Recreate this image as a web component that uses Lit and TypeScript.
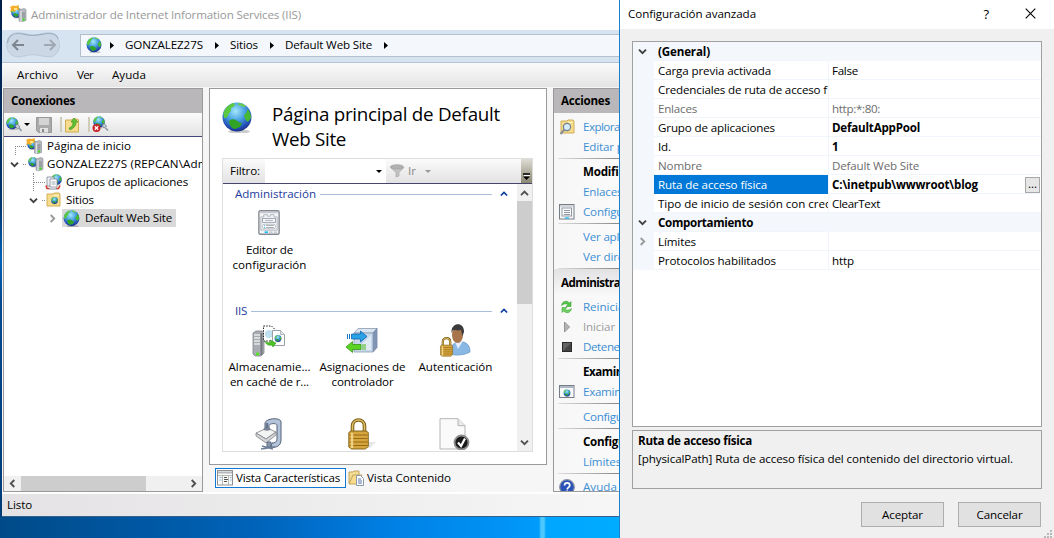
import { LitElement, html, svg, css, nothing } from "lit";
import { customElement, property } from "lit/decorators.js";
import { classMap } from "lit/directives/class-map.js";

/* Inline label whose tracking is adjusted so it occupies `w` pixels. */
@customElement("fit-text")
class FitText extends LitElement {
  static styles = css`
    :host { display: inline-block; white-space: pre; width: max-content; }
  `;
  @property({ type: Number }) w = 0;
  @property() text = "";
  render() { return html`${this.text}`; }
  updated() {
    if (!this.w) return;
    this.style.letterSpacing = "0px";
    const natural = this.getBoundingClientRect().width;
    this.style.letterSpacing = (this.w - natural) / this.text.length + "px";
  }
}

const t = (text: string, w = 0) => html`<fit-text .text=${text} .w=${w}></fit-text>`;
const ico = (w: number, h: number, body: unknown, vb = `0 0 ${w} ${h}`) =>
  html`<svg width=${w} height=${h} viewBox=${vb}>${body}</svg>`;

const globeBody = svg`
  <defs><radialGradient id="g" cx=".45" cy=".3" r=".7">
    <stop offset="0" stop-color="#a4e8fb"/><stop offset=".45" stop-color="#4aa3e2"/><stop offset=".82" stop-color="#2450b8"/><stop offset="1" stop-color="#1a2f86"/>
  </radialGradient></defs>
  <ellipse cx="17" cy="29.5" rx="11" ry="2" fill="#000" opacity=".2"/>
  <circle cx="15" cy="15" r="14.5" fill="url(#g)"/>
  <path d="M1.500 11C3 6 7 2 12 1l1 2-2 2-2 1 0 3-2 2-1 3-2 2-2 0z" fill="#5cc83f"/>
  <path d="M16 1c3 0 6 1 8 3l-2 1-3-1-3-1z" fill="#6acb54"/>
  <path d="M7 19c2-2 5-2 7-1 2 2 4 3 6 3l-2 4-5 2c-3 0-6-4-6-8z" fill="#2fa427"/>
  <path d="M25 7c3 2 4 6 4 9l-3 4-3-3-1-4 3-3z" fill="#47b834"/>`;
const globe = (s: number) => ico(s, s, globeBody, "0 0 30 31");
const globeAt = (x: number, y: number, s: number) =>
  svg`<g transform="translate(${x} ${y}) scale(${s / 30})">${globeBody}</g>`;

const serverAt = (x: number, y: number) => svg`<g transform="translate(${x} ${y})">
  <path d="M0 1.5 5 0l2 1v11l-5 1.500-2-1z" fill="#b9bdc2" stroke="#868b92" stroke-width=".6"/>
  <path d="M2 2.500v11" stroke="#eceef0" stroke-width=".8"/>
  <path d="M3 4.500h3M3 6.500h3M3 8.500h3" stroke="#6f747b" stroke-width=".8"/><circle cx="4.500" cy="11" r="1.300" fill="#46d82c"/></g>`;
const star = svg`<path d="M0 2l3-1.500L6 1l3-1-.5 3L10 5H6L5 7 2.500 6 0 7l1-3z" fill="#f4ae2a"/><path d="M4 3h3v2H4z" fill="#fde58a"/>`;
const iisHome = ico(16, 16, svg`${globeAt(1, 1.5, 10)}${star}${serverAt(8.5, 2.5)}`);

const folderAt = (x = 0, y = 0) => svg`<g transform="translate(${x} ${y})">
  <path d="M1 4V2h6l1-1h5l1 1v12H1z" fill="#f6dc8c" stroke="#d0ae55"/><path d="M8 3.500h5" stroke="#fff3c4"/></g>`;
const folderUp = ico(16, 16, svg`${folderAt(.5, 1)}<path d="M5 11c3-1 4-3 4-6H7l3-4 4 4h-2c0 4-2 6-6 8z" fill="#5fc034" stroke="#3b8f1d" stroke-width=".6"/>`);
const pools = ico(18, 16, svg`${globeAt(6, 0, 11)}
  <path d="M2 3h7v9H2z" fill="#eef1f5" stroke="#7d8894" stroke-width=".8"/><path d="M5 5h7v8H5z" fill="#fff" stroke="#7d8894" stroke-width=".8"/>
  <path d="M6.500 8h4M6.500 10h4" stroke="#9aa7b5"/><path d="M1 11.500l1 3h2.500M11 14.500h2.500l1.500-3" fill="none" stroke="#d0392b" stroke-width="1.600"/><path d="M4 15h8" stroke="#9aa4ae" stroke-width="1.200"/>`);
const connect = ico(17, 17, svg`${globeAt(0, 1, 12.500)}<path d="M9 10l2.500-2 2.500 3-2.500 2z" fill="#c4ced8" stroke="#66727f" stroke-width=".7"/><path d="M13 12l2.500 3" stroke="#8d99a5" stroke-width="1.700"/>`);
const disconnect = ico(17, 17, svg`${globeAt(1, 0, 12)}<path d="M10 9l2.500-1.500 2 3-2.500 1.500z" fill="#c4ced8" stroke="#66727f" stroke-width=".7"/><path d="M13.500 12l2.500 2.500" stroke="#8d99a5" stroke-width="1.700"/>
  <circle cx="4.500" cy="12" r="4" fill="#c9232a"/><path d="M2.800 10.300l3.400 3.400m0-3.400l-3.400 3.400" stroke="#fff" stroke-width="1.300"/>`);
const save = ico(16, 16, svg`<path d="M.5.5h15v15h-13l-2-2z" fill="#aaa" stroke="#999"/><path d="M3 1h10v7H3z" fill="#d4d4d4"/><path d="M4 11h8v4.500H4z" fill="#e4e4e4"/><path d="M6 12h2v3H6z" fill="#888"/>`);
const chev = (dir: "down" | "up" | "left" | "right", color = "#404040", s = 9) => {
  const d = { down: "M1 2.700l3.500 3.500L8 2.700", up: "M1 6.200l3.500-3.500L8 6.200", left: "M6.300 1L2.800 4.500l3.500 3.500", right: "M2.700 1l3.500 3.500L2.700 8" }[dir];
  return ico(s, s, svg`<path d=${d} fill="none" stroke=${color} stroke-width="1.900"/>`, "0 0 9 9");
};
const tri = (color = "#000") => ico(6, 3, svg`<path d="M0 0h6L3 3z" fill=${color}/>`);
const triR = ico(4, 7, svg`<path d="M0 0v7l4-3.500z" fill="#000"/>`);
const funnel = ico(15, 14, svg`<ellipse cx="7" cy="3" rx="6.500" ry="2.300" fill="#b0b0b0" stroke="#9a9a9a" stroke-width=".6"/><path d="M.5 3.500L6 8.500V13l3-1V8.500l5-5c-3 2-10 2-13.500 0z" fill="#c2c2c2" stroke="#a3a3a3" stroke-width=".6"/>`);

const cfg = ico(22, 25, svg`<rect x=".7" y=".7" width="20.600" height="24" rx="1.500" fill="#f4f5f7" stroke="#858a92" stroke-width="1.400"/>
  <path d="M2 2.500h18" stroke="#c3c7cd" stroke-width="1.500"/><path d="M2.700 20.500V7h3V4.700h3.600v1.600h3.200V4.700h3.500V7h3.300v13.500z" fill="none" stroke="#b4b9c1"/>
  <rect x="4.500" y="8.500" width="13" height="4" fill="#fff" stroke="#9299a4" stroke-width=".9"/><rect x="4.500" y="14.500" width="13" height="4.500" rx="1.500" fill="#fff" stroke="#b4bac3" stroke-width=".9"/>
  <path d="M7 10.500h8M8 15.800h8M8 17.800h8" stroke="#9299a4" stroke-width=".8"/><path d="M6 16h1M6 18h1" stroke="#28a8e0"/><path d="M6.500 22.500h3.500" stroke="#12b9f0" stroke-width="1.600"/><path d="M11 22.500h3.500M16 22.500h3" stroke="#bfc3c9" stroke-width="1.400"/>`, "0 0 22 25.400");
const cfgSmall = ico(16, 16, svg`<rect x=".5" y=".5" width="14.500" height="14.500" fill="#f4f6f8" stroke="#767d87"/><path d="M1 2h13.500" stroke="#b3b9c1"/>
  <rect x="3" y="4" width="9.500" height="8" fill="#fff" stroke="#9299a4"/><path d="M5 6.500h6M5 8.500h6M5 10.500h6" stroke="#8c949f"/><path d="M6 14h4" stroke="#12b9f0" stroke-width="1.300"/>`);

const cacheIco = ico(33, 32, svg`<path d="M1 8l3-2h6l2 1v21l-3 3H3l-2-2z" fill="#a9adb2" stroke="#82878d" stroke-width=".8"/>
  <path d="M2 10h6M2 13h6M2 16h6M2 19h6" stroke="#e6e7e9" stroke-width="1.300"/><path d="M9.500 8v22" stroke="#74787e" stroke-width="2"/><circle cx="5.500" cy="29" r="1.700" fill="#55e12c"/>
  <path d="M11.500 1h8l4 4v11h-12z" fill="#fff" stroke="#222" stroke-dasharray="1.500 1.200"/><circle cx="17" cy="9" r="4" fill="#bfe0ee"/>
  <path d="M20.500 5.500h8l4 4v11h-12z" fill="#fff" stroke="#9aa0a8"/><path d="M28.500 5.500v4h4" fill="#e3e6ea" stroke="#9aa0a8" stroke-width=".7"/>${globeAt(22.500, 10, 7)}
  <path d="M13 16c2 2 4 2 6 1l-1-2 6 3-3 4-1-2c-3 1-6 0-7-4z" fill="#4cc224" stroke="#2f8f13" stroke-width=".5"/>`);
const mapIco = ico(33, 27, svg`<path d="M9 6l4-4.500h19L28 6z" fill="#d9e4f1" stroke="#8d9cb2" stroke-width=".8"/><path d="M28 6l4-4.500v19L28 25z" fill="#8095b6" stroke="#7486a2" stroke-width=".8"/>
  <path d="M9 6h19v19H9z" fill="#c6d7ec" stroke="#8d9cb2" stroke-width=".8"/><path d="M11 23L26 8v15z" fill="#e0eaf5"/>
  <path d="M6.500 7h9V4l6.500 5.500-6.500 5.500v-3h-9z" fill="#29a3e4" stroke="#1565b3" stroke-width=".8"/><path d="M2.500 7v5M4.500 7v5" stroke="#1b78c8"/>
  <path d="M16 17.500H7.500v-3L1 20l6.500 5.500v-3H16z" fill="#5bd323" stroke="#339514" stroke-width=".8"/><path d="M18 17v6M20 17v6" stroke="#46b51c"/>`);
const lockBody = svg`<path d="M4.500 15V8c0-8 12-8 12 0v7" fill="none" stroke="#7c5c14" stroke-width="3.600"/><path d="M4.500 15V8c0-8 12-8 12 0v7" fill="none" stroke="#dfc268" stroke-width="1.600"/>
  <path d="M.8 14.500l2-1.500h15.500l2 1.500v14l-3 2.500H3.500L.8 29z" fill="#d6a53d" stroke="#7c5c14" stroke-width=".9"/><path d="M1.500 17h18M1.500 20.500h18M1.500 24h18M1.500 27.500h18" stroke="#946b17"/><path d="M4 15v15" stroke="#f9df95" stroke-width="2.500" opacity=".8"/>`;
const lockIco = ico(28, 32, svg`<path d="M20 24l8 0-6 6h-4z" fill="#bbb" opacity=".35"/>${lockBody}`);
const authIco = ico(32, 33, svg`<path d="M11 30c0-8 3-11 8-12h5c5 1 7 5 7 10-5 3-14 4-20 2z" fill="#8ab8e4" stroke="#5f8fc0" stroke-width=".7"/>
  <path d="M16 18l3 7 5-8z" fill="#e5eefa"/><ellipse cx="18.500" cy="11" rx="5.500" ry="8" fill="#a8744b"/><path d="M12.500 9c-1-11 13-12 12.500-1l-1.500 4-1.500-6c-3 1-6 0-8 0z" fill="#3b3a3c"/>
  <g transform="translate(1 13) scale(.62)">${lockBody}</g>`);
const compressIco = ico(28, 32, svg`<path d="M10 5c1-5 16-6 16-1v18c0 6-5 8-10 7l1-4c3 0 5-1 5-4V7c0-2-8-2-8 1v3h-4z" fill="#b3c3d9" stroke="#566377" stroke-width="1"/>
  <path d="M1 15l11-5 9 4-10 7z" fill="#f3f3f4" stroke="#808388" stroke-width=".8"/><path d="M1 15l10 6 10-7v3l-10 8L1 18z" fill="#d2d4d8" stroke="#808388" stroke-width=".8"/>
  <ellipse cx="12" cy="11" rx="3.500" ry="1.700" fill="#798596"/><path d="M12 5v5" stroke="#65748a" stroke-width="2.500"/><path d="M12 24h4v5h-4z" fill="#8997aa" stroke="#5f6f86"/><path d="M6 31l14-2M7 28l11 3" fill="none" stroke="#6f7f96" stroke-width="1.600"/>`);
const errIco = ico(31, 32, svg`<path d="M1 .7h18l7 7V31H1z" fill="#fafafa" stroke="#b4b4b4"/><path d="M19 .7v7h7" fill="#e9e9e9" stroke="#b4b4b4"/>
  <circle cx="22.500" cy="24.500" r="7" fill="#1a1a1a" stroke="#8d8d8d" stroke-width="1.800"/><path d="M19 24.500l3 3.500 4-7.500" fill="none" stroke="#fff" stroke-width="2.200"/>`);

const tabFeat = ico(16, 16, svg`<rect x=".5" y=".5" width="15" height="14.500" fill="#fafaf7" stroke="#909090"/><path d="M1 2.500h14" stroke="#b3b6bb" stroke-width="2"/><path d="M1 5.500h14M5.500 5v10M11.500 5v10" stroke="#a9a9a9" stroke-width=".8"/>
  <path d="M7 7.500h3M7 9.500h4M7 11.500h3" stroke="#555"/><path d="M2.500 7.500h2M2.500 10h2M13 7.500h1.500M13 10h1.500" stroke="#7aaedc"/>`);
const tabCont = ico(16, 16, svg`<path d="M1 13V2h4l1-1h5v12z" fill="#f3dc95" stroke="#c2a55a"/><path d="M1 14l4-9h9l-3 9z" fill="#f8dc8a" stroke="#c2a55a"/><path d="M8.500 5.500h4l3 3v7h-7z" fill="#fff" stroke="#8a98ae"/><path d="M10 9h3M10 11h4M10 13h4" stroke="#5675ab"/>`);

const explore = ico(16, 16, svg`${folderAt(1, 0)}<circle cx="8" cy="8" r="3.600" fill="#d6ecfa" stroke="#6c7f92" stroke-width="1.200"/><path d="M5.500 10.500L1.500 15" stroke="#8b8f96" stroke-width="2.200"/>`);
const restart = ico(16, 16, svg`<path d="M2.500 6.500c1-5 5.500-5 8-2.500L12 2.500v5H7l2-2c-2-1-4-1-6.500 1z" fill="#52c648" stroke="#2c9426" stroke-width=".5"/><path d="M12.500 9.500c-1 5-5.500 5-8 2.500L3 13.500v-5h5l-2 2c2 1 4 1 6.500-1z" fill="#6fd363" stroke="#2c9426" stroke-width=".5"/>`);
const play = ico(16, 16, svg`<path d="M5.500 3v10l5-5z" fill="#b5b5b5" stroke="#929292"/>`);
const stop = ico(16, 16, svg`<rect x="3.500" y="3.500" width="9" height="9" fill="#444" stroke="#2b2b2b"/><path d="M4 12l8-8H4z" fill="#636363"/>`);
const browse = ico(16, 14, svg`<rect x=".5" y=".5" width="14.500" height="12" fill="#f7f8fa" stroke="#767d87"/><path d="M1 2h13.500" stroke="#98a4b4" stroke-width="1.500"/>${globeAt(4.500, 4.500, 7)}`);
const help = ico(16, 16, svg`<circle cx="8" cy="8" r="7.300" fill="#2a52b8" stroke="#8a93a6" stroke-width="1.200"/><path d="M5.500 6.500c0-3.500 5.300-3.500 5.300 0 0 2-2.600 1.800-2.600 4M8.200 11.500v1.800" fill="none" stroke="#fff" stroke-width="1.700"/>`);

type Act = { k: "row" | "head" | "sep" | "band"; text?: string; w?: number; icon?: unknown; off?: boolean };
const actions: Act[] = [
  { k: "row", text: "Explorar", w: 41, icon: explore },
  { k: "row", text: "Editar permisos...", w: 91 },
  { k: "sep" },
  { k: "head", text: "Modificar sitio", w: 80 },
  { k: "row", text: "Enlaces...", w: 48 },
  { k: "row", text: "Configuración básica...", w: 117, icon: cfgSmall },
  { k: "sep" },
  { k: "row", text: "Ver aplicaciones", w: 84 },
  { k: "row", text: "Ver directorios virtuales", w: 124 },
  { k: "sep" },
  { k: "band", text: "Administrar sitio web", w: 114 },
  { k: "row", text: "Reiniciar", w: 46, icon: restart },
  { k: "row", text: "Iniciar", w: 32, icon: play, off: true },
  { k: "row", text: "Detener", w: 41, icon: stop },
  { k: "sep" },
  { k: "head", text: "Examinar sitio web", w: 102 },
  { k: "row", text: "Examinar *:80 (http)", w: 103, icon: browse },
  { k: "sep" },
  { k: "row", text: "Configuración avanzada...", w: 131 },
  { k: "sep" },
  { k: "head", text: "Configurar", w: 59 },
  { k: "row", text: "Límites...", w: 47 },
  { k: "sep" },
  { k: "row", text: "Ayuda", w: 34, icon: help },
];

type Prop = { l: string; lw: number; v?: string; vw?: number; bold?: boolean; dim?: boolean; sel?: boolean; cat?: boolean; exp?: boolean };
const props: Prop[] = [
  { l: "(General)", lw: 52, cat: true },
  { l: "Carga previa activada", lw: 113, v: "False", vw: 26 },
  { l: "Credenciales de ruta de acceso f", lw: 169 },
  { l: "Enlaces", lw: 39, v: "http:*:80:", vw: 48, dim: true },
  { l: "Grupo de aplicaciones", lw: 117, v: "DefaultAppPool", vw: 88, bold: true },
  { l: "Id.", lw: 13, v: "1", vw: 7, bold: true },
  { l: "Nombre", lw: 44, v: "Default Web Site", vw: 87, dim: true },
  { l: "Ruta de acceso física", lw: 109, v: "C:\\inetpub\\wwwroot\\blog", vw: 146, bold: true, sel: true },
  { l: "Tipo de inicio de sesión con cred", lw: 174, v: "ClearText", vw: 48 },
  { l: "Comportamiento", lw: 95, cat: true },
  { l: "Límites", lw: 38, exp: true },
  { l: "Protocolos habilitados", lw: 118, v: "http", vw: 22 },
];

@customElement("app-root")
class AppRoot extends LitElement {
  static styles = css`
    :host { display: block; position: relative; width: 1054px; height: 538px; overflow: hidden;
      font: 11.6px/18px "Open Sans", "Noto Sans", sans-serif; color: #000;
      background: linear-gradient(90deg, #004a88 0, #0056a0 130px, #0064ba 260px, #0072d2 330px, #0082e6 400px, #0092f4 500px, #009cfc 539px, #4cc8ff 541px 544px, #00a6ff 546px, #00acff 620px); }
    * { box-sizing: border-box; }
    svg { display: block; flex: none; }
    fit-text { flex: none; }
    b, .b { font-weight: 700; }
    .edge { position: absolute; left: 0; top: 0; width: 2px; height: 517px; background: linear-gradient(#001f48, #01366e 40%, #0062b8 50%, #024a90 58%, #003c78); }
    .win { position: absolute; left: 2px; top: 0; width: 640px; height: 517px; display: flex; flex-direction: column; background: #f6f6f6; border-bottom: 1px solid #35618d; }
    .title { height: 30px; flex: none; background: #fff; display: flex; align-items: center; gap: 4px; padding-left: 8px; color: #999; }
    .title svg { margin-top: -3px; }
    .nav { height: 33px; flex: none; background: #d6e4f1; border-bottom: 1px solid #b4c3d3; display: flex; padding: 2px 0 0 4px; }
    .pill { margin-right: 20px; }
    .addr { flex: 1; height: 23px; margin-top: 2px; border: 1px solid #b3bfcb; background: #f4f8fc; display: flex; align-items: center; padding: 0 0 2px 5px; }
    .addr svg + svg { margin: 1px 11px 0 8px; }
    .addr fit-text + svg { margin: 1px 11px 0 12px; }
    .menu { height: 24px; flex: none; display: flex; align-items: center; gap: 19px; padding-left: 15px; background: linear-gradient(#fafafa, #e4e4e4); }
    .body { height: 406px; flex: none; display: flex; gap: 6px; padding: 1px 0 0 1px; border-bottom: 1px solid #fff; }
    .status { flex: 1; background: linear-gradient(90deg, #e4e2e4, #f6f6f6 600px); padding: 2px 5px; border-top: 1px solid #fdfdfd; }
    .panel { border: 1px solid #9a9a9a; background: #fff; overflow: hidden; display: flex; flex-direction: column; flex: none; }
    .conn { width: 200px; height: 404px; }
    .ph { height: 24px; flex: none; background: #bab7ba; padding: 3px 7px; font-weight: 700; }
    .tb { height: 24px; flex: none; background: linear-gradient(#fbfbfb, #e3e3e3); border-bottom: 1px solid #45457a; display: flex; align-items: center; padding-left: 2px; }
    .dd { margin: 0 6px 0 1px; }
    .bar { width: 2px; height: 15px; background: #cfcdb9; margin: 0 2px 0 8px; }
    .tree { flex: 1; }
    .node { height: 18px; display: flex; align-items: center; white-space: nowrap; }
    .n1 { padding-left: 11px; } .n2 { padding-left: 6px; } .n3 { padding-left: 29px; } .n4 { padding-left: 25px; } .n5 { padding-left: 44px; }
    .node .pic { margin-right: 4px; }
    .n1 .pic { margin-right: 5px; }
    .n2 .pic, .n4 .pic { margin-right: 3px; }
    .n3 .pic { margin-right: 3px; }
    .n4 .pic { margin-left: -1px; margin-right: 4px; }
    .dots { height: 1px; background: repeating-linear-gradient(90deg, #888 0 1px, transparent 1px 2px); }
    .lead { width: 11px; height: 9px; margin-top: 9px; border-left: 1px dotted #888; border-top: 1px dotted #888; flex: none; }
    .lead2 { width: 12px; height: 18px; border-left: 1px dotted #888; background: repeating-linear-gradient(90deg, #888 0 1px, transparent 1px 2px) 0 9px / 100% 1px no-repeat; flex: none; }
    .tick { width: 4px; flex: none; margin-left: 4px; }
    .selnode { background: #d9d9d9; display: flex; align-items: center; height: 18px; padding: 0 4px 0 1px; margin-left: 5px; }
    .selnode .pic { margin-right: 5px; }
    .hs { height: 15px; flex: none; background: #f0f0f0; display: flex; align-items: center; padding: 0 4px; justify-content: space-between; }
    .thumb { width: 125px; height: 15px; background: #cdcdcd; margin-right: 39px; }
    .mid { width: 338px; flex: none; }
    .center { height: 377px; padding: 12px 13px 12px 12px; }
    .hd { display: flex; height: 57px; flex: none; }
    .hd svg { margin: 1px 0 0 0; }
    h1 { margin: 1px 0 0 20px; font: 400 18.800px/25px "Open Sans", sans-serif; display: flex; flex-direction: column; }
    .list { width: 311px; height: 294px; flex: none; border: 1px solid #dedede; display: flex; flex-direction: column; }
    .filter { height: 25px; flex: none; background: linear-gradient(#fbfbfb, #e2e2e2); border-bottom: 1px solid #45456e; display: flex; align-items: center; padding-left: 7px; }
    .inp { width: 121px; height: 24px; background: #fff; margin-left: 5px; display: flex; align-items: center; justify-content: flex-end; padding-right: 4px; }
    .ir { color: #888; margin: 0 9px 0 3px; }
    .filter .fun { margin-left: 4px; }
    .ovf { margin-left: auto; width: 11px; height: 24px; background: linear-gradient(#dedcd4, #8b8873); display: flex; align-items: flex-end; justify-content: center; padding-bottom: 2px; }
    .rows { flex: 1; display: flex; overflow: hidden; }
    .scroll { flex: 1; overflow: hidden; }
    .grp { display: flex; align-items: center; height: 20px; color: #1e3c9c; padding: 0 9px 0 12px; }
    .rule { flex: 1; height: 1px; background: #a9bedd; margin: 0 8px 0 4px; }
    .g2 { margin-top: 97px; }
    .items { display: grid; grid-template-columns: repeat(3, 93px); line-height: 15px; }
    .it { display: flex; flex-direction: column; align-items: center; height: 93px; }
    .it .im { height: 33px; margin: 0 2px 2px 0; display: flex; align-items: center; }
    .first { height: 0; }
    .first .it { padding-top: 2px; }
    .first .im { margin-bottom: 3px; }
    .second { margin-top: 3px; }
    .vs { width: 15px; flex: none; background: #f0f0f0; display: flex; flex-direction: column; align-items: center; padding: 5px 0 4px; justify-content: space-between; }
    .vthumb { width: 15px; height: 103px; background: #cdcdcd; margin-top: -132px; }
    .tabs { display: flex; padding: 3px 0 0 6px; align-items: center; }
    .tab { display: flex; align-items: center; height: 20px; border: 1px solid transparent; padding: 0 5px 0 1px; gap: 3px; }
    .tab.on { border-color: #0f78d4; background: #fff; }
    .tab + .tab { padding-left: 1px; }
    .acts { width: 200px; height: 404px; background: linear-gradient(90deg, #f7f7f7, #fff); }
    .acts .ph { margin-bottom: 4px; }
    .a { height: 20px; flex: none; display: flex; align-items: center; padding-left: 5px; gap: 8px; color: #3d8fd4; white-space: nowrap; }
    .a .slot { width: 16px; flex: none; }
    .a.off { color: #9c9c9c; }
    .a.head { color: #000; font-weight: 700; }
    .sep { height: 5px; flex: none; padding-top: 1px; }
    .sep div { height: 1px; margin-left: 4px; width: 100px; background: linear-gradient(90deg, #ddd, #888 60px); }
    .band { height: 28px; margin-top: -3px; flex: none; padding: 5px 7px; font-weight: 700; background: linear-gradient(#e2e2e4, #fafafa); white-space: nowrap; }

    .dlg { position: absolute; left: 619px; top: 0; width: 435px; height: 538px; background: #f0f0f0; border-left: 1px solid #1a80d0; display: flex; flex-direction: column; }
    .dt { height: 29px; flex: none; background: #fff; display: flex; align-items: center; padding: 0 18px 2px 8px; margin-bottom: 12px; }
    .q { margin-left: auto; margin-right: 36px; font-size: 13px; }
    .pg { width: 410px; height: 386px; flex: none; margin-left: 12px; border: 1px solid #a0a0a0; background: #fff; }
    .pr { display: grid; grid-template-columns: 21px 174px 1fr; height: 19px; line-height: 20px; }
    .gut { background: #f4f7fc; display: flex; align-items: center; padding-left: 5px; }
    .lab { height: 19px; border-bottom: 1px solid #f0f4fb; padding-left: 4px; overflow: hidden; white-space: nowrap; }
    .val { height: 19px; border-bottom: 1px solid #f0f4fb; border-left: 1px solid #f0f4fb; padding-left: 3px; display: flex; justify-content: space-between; padding-right: 1px; }
    .cat { background: #f4f7fc; font-weight: 700; }
    .dim { color: #6d6d6d; }
    .sel .lab { background: #0078d7; color: #fff; border-bottom: 0; }
    .more { width: 15px; height: 16px; margin-top: 2px; background: #e6e6e6; border: 1px solid #a8a8a8; font-weight: 400; line-height: 11px; text-align: center; }
    .desc { width: 410px; height: 59px; margin: 3px 0 0 12px; border: 1px solid #a0a0a0; padding: 1px 5px; display: flex; flex-direction: column; align-items: flex-start; flex: none; }
    .btns { display: flex; gap: 14px; margin: 13px 0 0 241px; }
    .btn { width: 83px; height: 25px; border: 1px solid #adadad; background: #e1e1e1; display: flex; align-items: center; justify-content: center; }
    .grip { position: absolute; right: 1px; bottom: 0; }
  `;

  private act(a: Act) {
    if (a.k === "sep") return html`<div class="sep"><div></div></div>`;
    if (a.k === "band") return html`<div class="band">${t(a.text!, a.w)}</div>`;
    return html`<div class=${classMap({ a: true, head: a.k === "head", off: !!a.off })}>
      <div class="slot">${a.icon ?? nothing}</div>${t(a.text!, a.w)}</div>`;
  }

  private prop(p: Prop) {
    if (p.cat) return html`<div class="pr cat"><div class="gut">${chev("down")}</div><div class="lab">${t(p.l, p.lw)}</div><div></div></div>`;
    return html`<div class=${classMap({ pr: true, dim: !!p.dim, sel: !!p.sel })}>
      <div class="gut">${p.exp ? chev("right", "#9a9a9a") : nothing}</div>
      <div class="lab">${t(p.l, p.lw)}</div>
      <div class=${classMap({ val: true, b: !!p.bold })}>${p.v ? t(p.v, p.vw) : nothing}${p.sel ? html`<div class="more">...</div>` : nothing}</div>
    </div>`;
  }

  private item(icon: unknown, lines: [string, number][] = []) {
    return html`<div class="it"><div class="im">${icon}</div>${lines.map(([s, w]) => t(s, w))}</div>`;
  }

  render() {
    return html`
      <div class="edge"></div>
      <div class="win">
        <div class="title">${ico(17, 17, svg`${globeAt(1, 2, 11)}${star}${serverAt(9, 3.500)}`)}${t("Administrador de Internet Information Services (IIS)", 270)}</div>
        <div class="nav">
          <svg class="pill" width="54" height="26" viewBox="0 0 54 26">
            <path d="M12 .8C18 .8 20 3 27 3S37 .8 43 .8c14 0 14 24 0 24-6 0-9-2-16-2s-9 2-15 2c-15 0-15-24 0-24z" fill="#cbd7e5" stroke="#bccad9"/>
            <path d="M1.500 11C2 5 6 1.500 12 1.500c6 0 8 2 15 2s10-2 16-2c5 0 8 2 9 5" fill="none" stroke="#9fafc1" stroke-width="1.200"/>
            <path d="M18 13H7m5-5l-5 5 5 5" fill="none" stroke="#7d868f" stroke-width="2"/>
            <path d="M38 13h11m-5-5l5 5-5 5" fill="none" stroke="#9fa8b2" stroke-width="2"/>
          </svg>
          <div class="addr">${globe(16)}${triR}${t("GONZALEZ27S", 78)}${triR}${t("Sitios", 28)}${triR}${t("Default Web Site", 87)}${triR}</div>
        </div>
        <div class="menu">${t("Archivo", 41)}${t("Ver", 16)}${t("Ayuda", 34)}</div>
        <div class="body">
          <div class="panel conn">
            <div class="ph">${t("Conexiones", 64)}</div>
            <div class="tb">${connect}<span class="dd">${tri()}</span>${save}<div class="bar"></div>${folderUp}<div class="bar"></div>${disconnect}</div>
            <div class="tree">
              <div class="node n1"><div class="lead"></div><div class="pic">${iisHome}</div>${t("Página de inicio", 84)}</div>
              <div class="node n2">${chev("down")}<div class="dots tick"></div><div class="pic">${ico(17, 16, svg`${globeAt(1, 1, 10)}${serverAt(9, 1.500)}`)}</div>${t("GONZALEZ27S (REPCAN\\Administrador)", 219)}</div>
              <div class="node n3"><div class="lead2"></div><div class="pic">${pools}</div>${t("Grupos de aplicaciones", 122)}</div>
              <div class="node n4">${chev("down")}<div class="dots tick"></div><div class="pic">${ico(17, 16, svg`${folderAt(1, 0)}${globeAt(6, 5, 7)}`)}</div>${t("Sitios", 28)}</div>
              <div class="node n5">${chev("right", "#9a9a9a")}<div class="selnode"><div class="pic">${globe(17)}</div>${t("Default Web Site", 87)}</div></div>
            </div>
            <div class="hs">${chev("left", "#505050")}<div class="thumb"></div>${chev("right", "#505050")}</div>
          </div>
          <div class="mid">
            <div class="panel center">
              <div class="hd">${ico(30, 31, globeBody)}<h1>${t("Página principal de Default", 228)}${t("Web Site", 74)}</h1></div>
              <div class="list">
                <div class="filter">${t("Filtro:", 30)}<div class="inp">${tri()}</div><div class="fun">${funnel}</div><span class="ir">${t("Ir", 8)}</span>${tri("#999")}
                  <div class="ovf">${ico(7, 8, svg`<path d="M0 1h7" stroke="#000" stroke-width="1.500"/><path d="M0 3.500h7L3.500 7z" fill="#000"/><path d="M1 2.500h6" stroke="#fff"/>`)}</div></div>
                <div class="rows">
                  <div class="scroll">
                    <div class="grp">${t("Administración", 81)}<div class="rule"></div>${chev("up", "#0a3c9c", 8)}</div>
                    <div class="items first">${this.item(cfg, [["Editor de", 47], ["configuración", 74]])}</div>
                    <div class="grp g2">${t("IIS", 12)}<div class="rule"></div>${chev("up", "#0a3c9c", 8)}</div>
                    <div class="items second">
                      ${this.item(cacheIco, [["Almacenamie...", 82], ["en caché de r...", 79]])}
                      ${this.item(mapIco, [["Asignaciones de", 86], ["controlador", 62]])}
                      ${this.item(authIco, [["Autenticación", 74]])}
                      ${this.item(compressIco)}${this.item(lockIco)}${this.item(errIco)}
                    </div>
                  </div>
                  <div class="vs">${chev("up", "#505050")}<div class="vthumb"></div>${chev("down", "#505050")}</div>
                </div>
              </div>
            </div>
            <div class="tabs">
              <div class="tab on">${tabFeat}${t("Vista Características", 104)}</div>
              <div class="tab">${tabCont}${t("Vista Contenido", 84)}</div>
            </div>
          </div>
          <div class="panel acts">
            <div class="ph">${t("Acciones", 49)}</div>
            ${actions.map((a) => this.act(a))}
          </div>
        </div>
        <div class="status">${t("Listo", 25)}</div>
      </div>

      <div class="dlg">
        <div class="dt">${t("Configuración avanzada", 128)}<span class="q">?</span>${ico(11, 11, svg`<path d="M.7.700l9.600 9.600m0-9.600L.7 10.300" stroke="#000" stroke-width="1.100"/>`)}</div>
        <div class="pg">${props.map((p) => this.prop(p))}</div>
        <div class="desc"><b>${t("Ruta de acceso física", 114)}</b>${t("[physicalPath] Ruta de acceso física del contenido del directorio virtual.", 375)}</div>
        <div class="btns"><div class="btn">${t("Aceptar", 41)}</div><div class="btn">${t("Cancelar", 46)}</div></div>
        <svg class="grip" width="9" height="8" viewBox="0 0 9 8"><path d="M6 0h2v2H6zM3 3h2v2H3zM6 3h2v2H6zM0 6h2v2H0zM3 6h2v2H3zM6 6h2v2H6z" fill="#b8b8b8"/></svg>
      </div>`;
  }
}
